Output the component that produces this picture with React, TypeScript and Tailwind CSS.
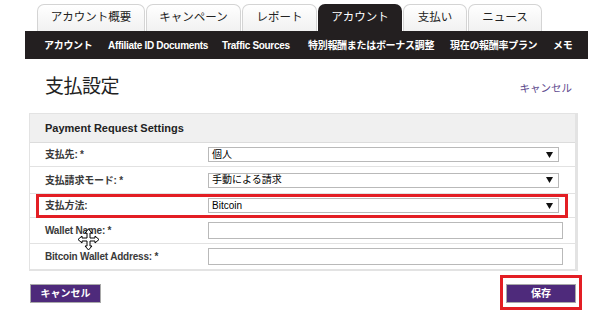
import React from "react";

const jp = { fontFamily: '"Liberation Sans", "Noto Sans CJK JP", sans-serif' };

const tabs = [
  { label: "アカウント概要", w: "w-[108px]" },
  { label: "キャンペーン", w: "w-[95px]" },
  { label: "レポート", w: "w-[75px]" },
  { label: "アカウント", w: "w-[84px]", active: true },
  { label: "支払い", w: "w-[64px]" },
  { label: "ニュース", w: "w-[74px]" },
];

const subnav = [
  { label: "アカウント", w: "w-[64px]" },
  { label: "Affiliate ID Documents", w: "w-[114px]" },
  { label: "Traffic Sources", w: "w-[86px]" },
  { label: "特別報酬またはボーナス調整", w: "w-[142px]" },
  { label: "現在の報酬率プラン", w: "w-[103px]" },
  { label: "メモ", w: "w-[30px]" },
];

function Select({ value }: { value: string }) {
  return (
    <div className="w-[351px] h-[15px] border border-[#b9b9b9] bg-white flex items-center justify-between pl-[3px] pr-[5px]">
      <span className="text-[10px] text-black leading-none">{value}</span>
      <svg width="7" height="6" viewBox="0 0 7 6">
        <path d="M0 0 H7 L3.5 6 Z" fill="#111" />
      </svg>
    </div>
  );
}

function TextInput() {
  return <div className="w-[355px] h-[17px] border border-[#b9b9b9] bg-white" />;
}

function Row({ label, h, children, last }: { label: string; h: string; children: React.ReactNode; last?: boolean }) {
  return (
    <div className={`flex items-center ${h} ${last ? "" : "border-b border-[#e2e2e2]"}`}>
      <div className="w-[178px] pl-[15px] text-[10px] font-bold text-[#3a3a3a] tracking-[-0.2px] whitespace-nowrap">{label}</div>
      {children}
    </div>
  );
}

export default function App() {
  return (
    <div className="relative w-[600px] h-[317px] bg-white overflow-hidden" style={jp}>
      {/* top tabs */}
      <div className="flex pl-[37px] pt-[4px] gap-[1px]">
        {tabs.map((t) => (
          <div
            key={t.label}
            className={`${t.w} h-[27px] rounded-t-[7px] flex items-center justify-center text-[11.5px] ${
              t.active
                ? "bg-[#231f20] text-white"
                : "bg-gradient-to-b from-white to-[#f1f1f1] border border-b-0 border-[#d4d4d4] text-[#222]"
            }`}
          >
            {t.label}
          </div>
        ))}
      </div>

      {/* sub navigation */}
      <div className="ml-[25px] w-[563px] h-[28px] bg-[#231f20] flex items-center pl-[19px]">
        {subnav.map((s) => (
          <span key={s.label} className={`${s.w} shrink-0 whitespace-nowrap text-[10px] font-bold text-white tracking-[-0.3px]`}>
            {s.label}
          </span>
        ))}
      </div>

      {/* title */}
      <div className="flex items-center justify-between h-[54px] pl-[45px] pr-[28px] pt-[2px]">
        <h1 className="text-[19px] text-[#222] tracking-[-0.5px] font-normal">支払設定</h1>
        <a className="text-[10.5px] text-[#5d4a8e] mt-[4px]">キャンセル</a>
      </div>

      {/* panel */}
      <div className="ml-[29px] w-[549px] border border-[#e3e3e3] border-r-[3px] border-b-[2px]">
        <div className="h-[29px] bg-[#f0f0f0] border-b border-[#dcdcdc] flex items-center pl-[15px] text-[11px] font-bold text-[#222]">
          Payment Request Settings
        </div>
        <Row label="支払先: *" h="h-[24px]">
          <Select value="個人" />
        </Row>
        <Row label="支払請求モード: *" h="h-[27px]">
          <Select value="手動による請求" />
        </Row>
        <div className="relative">
          <Row label="支払方法:" h="h-[24px]">
            <Select value="Bitcoin" />
          </Row>
          <div className="absolute left-[6px] right-[7px] top-0 bottom-0 border-[3px] border-[#e31e24]" />
        </div>
        <Row label="Wallet Name: *" h="h-[26px]">
          <TextInput />
        </Row>
        <Row label="Bitcoin Wallet Address: *" h="h-[25px]" last>
          <TextInput />
        </Row>
      </div>

      {/* buttons */}
      <div className="ml-[30px] w-[552px] flex justify-between items-start">
        <button className="mt-[13px] w-[71px] h-[19px] bg-[#4e2a7b] border border-[#a9a9a9] text-white text-[10px] font-bold flex items-center justify-center">
          キャンセル
        </button>
        <div className="mt-[4px] border-[3px] border-[#e31e24] pt-[6px] pb-[4px] px-[3px]">
          <button className="w-[70px] h-[19px] bg-[#4e2a7b] border border-[#a9a9a9] text-white text-[10px] font-bold flex items-center justify-center">
            保存
          </button>
        </div>
      </div>

      {/* mouse cursor over the form */}
      <svg className="absolute left-[77px] top-[228px]" width="23" height="23" viewBox="0 0 23 23">
        <path
          d="M11.5 1 L15 5 H13 V10 H18 V8 L22 11.5 L18 15 V13 H13 V18 H15 L11.5 22 L8 18 H10 V13 H5 V15 L1 11.5 L5 8 V10 H10 V5 H8 Z"
          fill="white"
          stroke="black"
          strokeWidth="1"
          strokeLinejoin="miter"
        />
      </svg>
    </div>
  );
}
